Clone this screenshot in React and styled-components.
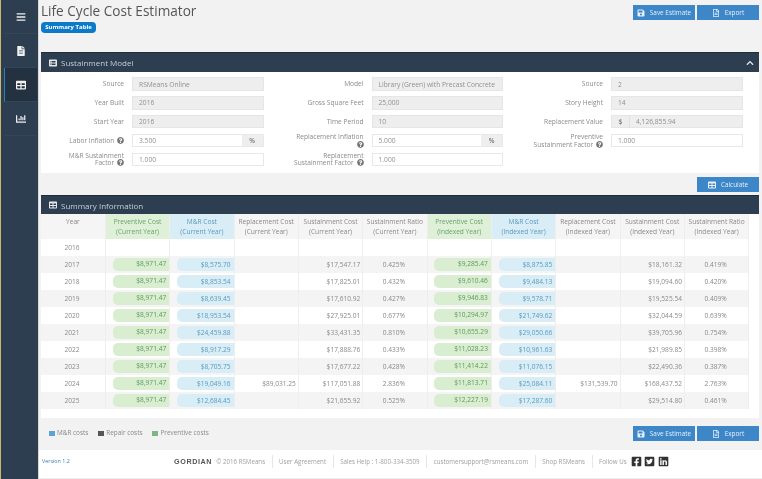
import React from "react";
import styled, { createGlobalStyle } from "styled-components";
import {
  FaBars,
  FaFileAlt,
  FaTable,
  FaChartBar,
  FaChevronUp,
  FaQuestionCircle,
  FaSave,
  FaRegFileAlt,
  FaListAlt,
  FaFacebookSquare,
  FaTwitterSquare,
  FaLinkedin,
} from "react-icons/fa";

///style///

const GlobalStyle = createGlobalStyle`
  html, body {
    margin: 0;
    padding: 0;
    background: #fff;
    overflow: hidden;
  }
  * { box-sizing: border-box; }
`;

const AppWrapper = styled.div`
  width: 762px;
  height: 479px;
  display: flex;
  font-family: "Open Sans", sans-serif;
  color: #777;
  filter: blur(0.45px);
`;

const Sidebar = styled.nav`
  width: 39px;
  flex: none;
  background: #2c3e50;
  border-left: 1px solid #c9b873;
  padding: 0 1px 0 3px;
  border-right: 1px solid #d8d8d8;
`;

const NavItem = styled.div`
  height: 34px;
  display: flex;
  align-items: center;
  justify-content: center;
  color: #f0f0f0;
  font-size: 10px;
  border-bottom: 1px solid #33475a;
  background: ${(p) => (p.$active ? "#233140" : "transparent")};
  border-left: 1px solid ${(p) => (p.$active ? "#2a7fc4" : "transparent")};
`;

const Main = styled.main`
  flex: 1;
  min-width: 0;
  display: flex;
  flex-direction: column;
  background: #f2f2f2;
`;

const Content = styled.div`
  flex: 1;
  padding: 0 3px 0 2px;
`;

const TopBar = styled.header`
  height: 52px;
  display: flex;
  justify-content: space-between;
  align-items: flex-start;
`;

const Title = styled.h1`
  margin: 0;
  font-size: 13.6px;
  line-height: 21px;
  font-weight: 400;
  color: #555;
`;

const Badge = styled.span`
  display: block;
  width: 55px;
  height: 11px;
  margin-top: 1px;
  border-radius: 4px;
  background: #0d7ac9;
  color: #fff;
  font-size: 6px;
  font-weight: 700;
  line-height: 11px;
  text-align: center;
`;

const ButtonRow = styled.div`
  display: flex;
  justify-content: flex-end;
  gap: 2px;
  padding-top: ${(p) => p.$top}px;
  padding-bottom: ${(p) => p.$bottom || 0}px;
`;

const ActionButton = styled.button`
  width: 62px;
  height: 15px;
  padding: 0;
  border: none;
  background: #3d87c8;
  color: #e6f0f8;
  font-family: inherit;
  font-size: 6.4px;
  display: flex;
  align-items: center;
  justify-content: center;
  gap: 5px;
  svg { font-size: 8px; flex: none; }
`;

const PanelHeader = styled.div`
  height: ${(p) => p.$height}px;
  background: #2c3e50;
  border-top: 1px solid #1f2d3a;
  color: #c4ced7;
  font-size: 8px;
  display: flex;
  align-items: center;
  gap: 4px;
  padding: 0 5px 0 8px;
  svg { font-size: 8px; color: #e4e8ec; }
`;

const HeaderTitle = styled.span`
  flex: 1;
`;

const FormBody = styled.div`
  height: 101px;
  background: #fff;
  padding: 5.4px 0 0;
  display: grid;
  grid-template-columns: repeat(3, 239.5px);
  grid-auto-rows: 13.5px;
  row-gap: 5.3px;
`;

const Field = styled.div`
  display: flex;
  align-items: center;
  padding-right: 17px;
`;

const Label = styled.div`
  width: 83px;
  margin-right: 8px;
  flex: none;
  text-align: right;
  font-size: 6.6px;
  line-height: 7.5px;
  color: #8a8a8a;
  svg { font-size: 7px; color: #777; vertical-align: -1px; margin-left: 1px; }
`;

const Input = styled.div`
  flex: 1;
  height: 13.5px;
  display: flex;
  align-items: center;
  background: ${(p) => (p.$readOnly ? "#eee" : "#fff")};
  border: 1px solid ${(p) => (p.$readOnly ? "#e6e6e6" : "#e8e8e8")};
  font-size: 6.7px;
  color: #909090;
  padding-left: 6px;
`;

const InputText = styled.span`
  flex: 1;
  white-space: nowrap;
`;

const Addon = styled.span`
  width: 21px;
  height: 100%;
  flex: none;
  display: flex;
  align-items: center;
  justify-content: center;
  background: #eee;
  font-weight: 600;
  font-size: 6.6px;
  color: #777;
`;

const PrefixAddon = styled(Addon)`
  width: 18px;
  margin: 0 6px 0 -6px;
  border-right: 1px solid #e0e0e0;
`;

const TablePanel = styled.div`
  background: #fff;
  padding-bottom: 9px;
`;

const Table = styled.table`
  width: 708px;
  table-layout: fixed;
  border-collapse: collapse;
  font-size: 6.6px;
`;

const HeadCell = styled.th`
  width: 64.35px;
  height: 25px;
  padding: 0;
  font-weight: 400;
  line-height: 9.5px;
  text-align: center;
  white-space: nowrap;
  border-right: 1px solid #eee;
  background: ${(p) =>
    p.$tone === "green" ? "#dff0d8" : p.$tone === "blue" ? "#d9edf7" : "#f5f5f5"};
  color: ${(p) =>
    p.$tone === "green" ? "#6ba36b" : p.$tone === "blue" ? "#5b9abd" : "#8a8a8a"};
`;

const Row = styled.tr`
  height: 17px;
  background: ${(p) => (p.$striped ? "#f4f4f4" : "#fff")};
`;

const Cell = styled.td`
  padding: 0 2px 0 0;
  text-align: ${(p) => p.$align || "right"};
  border-right: 1px solid #eee;
  color: #8a8a8a;
  white-space: nowrap;
`;

const PillCell = styled.td`
  padding: 0;
  border-right: 1px solid #eee;
`;

const Pill = styled.div`
  height: 13px;
  margin-left: 6.7px;
  border-radius: 5px 0 0 5px;
  background: ${(p) => (p.$tone === "green" ? "#d9eed0" : "#d9edf7")};
  color: ${(p) => (p.$tone === "green" ? "#5f975f" : "#5b9abd")};
  line-height: ${(p) => (p.$tone === "green" ? 11 : 14)}px;
  text-align: right;
  padding-right: 3px;
`;

const BottomBar = styled.div`
  height: 32px;
  display: flex;
  justify-content: space-between;
  align-items: flex-start;
`;

const Legend = styled.div`
  display: flex;
  gap: 10px;
  padding: 11px 0 0 8px;
  font-size: 6.4px;
  color: #8a8a8a;
`;

const LegendItem = styled.span`
  display: flex;
  align-items: center;
  gap: 2px;
  line-height: 8px;
  &::before {
    content: "";
    width: 6px;
    height: 5px;
    background: ${(p) => p.$color};
  }
`;

const Footer = styled.footer`
  height: 29px;
  flex: none;
  background: #fff;
  display: flex;
  align-items: flex-start;
  padding: 5px 0 0 3px;
  font-size: 6.2px;
  color: #a0a0a0;
  border-bottom: 1px solid #eee;
`;

const Version = styled.span`
  width: 125.5px;
  margin-top: 2px;
  font-size: 5.4px;
  color: #3c7fb5;
`;

const FooterLink = styled.span`
  display: flex;
  align-items: center;
  height: 13px;
  padding: 0 6.5px;
  border-right: ${(p) => (p.$last ? "none" : "1px solid #e6e6e6")};
  white-space: nowrap;
  gap: 1px;
`;

const Logo = styled.span`
  font-family: "Liberation Sans", sans-serif;
  font-weight: 700;
  font-size: 7.2px;
  letter-spacing: 0.6px;
  color: #555;
  margin-right: 3px;
`;

const Social = styled.span`
  display: flex;
  gap: 2.5px;
  margin-left: 3px;
  font-size: 11px;
  color: #333;
`;

//style end//

const rows = [
  ["2016"],
  ["2017", "$8,575.70", "", "$17,547.17", "0.425%", "$9,285.47", "$8,875.85", "", "$18,161.32", "0.419%"],
  ["2018", "$8,853.54", "", "$17,825.01", "0.432%", "$9,610.46", "$9,484.13", "", "$19,094.60", "0.420%"],
  ["2019", "$8,639.45", "", "$17,610.92", "0.427%", "$9,946.83", "$9,578.71", "", "$19,525.54", "0.409%"],
  ["2020", "$18,953.54", "", "$27,925.01", "0.677%", "$10,294.97", "$21,749.62", "", "$32,044.59", "0.639%"],
  ["2021", "$24,459.88", "", "$33,431.35", "0.810%", "$10,655.29", "$29,050.66", "", "$39,705.96", "0.754%"],
  ["2022", "$8,917.29", "", "$17,888.76", "0.433%", "$11,028.23", "$10,961.63", "", "$21,989.85", "0.398%"],
  ["2023", "$8,705.75", "", "$17,677.22", "0.428%", "$11,414.22", "$11,076.15", "", "$22,490.36", "0.387%"],
  ["2024", "$19,049.16", "$89,031.25", "$117,051.88", "2.836%", "$11,813.71", "$25,084.11", "$131,539.70", "$168,437.52", "2.763%"],
  ["2025", "$12,684.45", "", "$21,655.92", "0.525%", "$12,227.19", "$17,287.60", "", "$29,514.80", "0.461%"],
];

const heads = [
  ["Preventive Cost", "green"],
  ["M&R Cost", "blue"],
  ["Replacement Cost"],
  ["Sustainment Cost"],
  ["Sustainment Ratio"],
];

const Help = () => <FaQuestionCircle />;

const Buttons = ({ top }) => (
  <ButtonRow $top={top}>
    <ActionButton><FaSave />Save Estimate</ActionButton>
    <ActionButton><FaRegFileAlt />Export</ActionButton>
  </ButtonRow>
);

const FormField = ({ label, value, readOnly, suffix, prefix }) => (
  <Field>
    <Label>{label}</Label>
    <Input $readOnly={readOnly}>
      {prefix && <PrefixAddon>{prefix}</PrefixAddon>}
      <InputText>{value}</InputText>
      {suffix && <Addon>{suffix}</Addon>}
    </Input>
  </Field>
);

const App = () => (
  <AppWrapper>
    <GlobalStyle />
    <Sidebar>
      <NavItem><FaBars /></NavItem>
      <NavItem><FaFileAlt /></NavItem>
      <NavItem $active><FaTable /></NavItem>
      <NavItem><FaChartBar /></NavItem>
    </Sidebar>
    <Main>
      <Content>
        <TopBar>
          <div>
            <Title>Life Cycle Cost Estimator</Title>
            <Badge>Summary Table</Badge>
          </div>
          <Buttons top={5} />
        </TopBar>

        <PanelHeader $height={20}>
          <FaListAlt />
          <HeaderTitle>Sustainment Model</HeaderTitle>
          <FaChevronUp />
        </PanelHeader>
        <FormBody>
          <FormField label="Source" value="RSMeans Online" readOnly />
          <FormField label="Model" value="Library (Green) with Precast Concrete" readOnly />
          <FormField label="Source" value="2" readOnly />
          <FormField label="Year Built" value="2016" readOnly />
          <FormField label="Gross Square Feet" value="25,000" readOnly />
          <FormField label="Story Height" value="14" readOnly />
          <FormField label="Start Year" value="2016" readOnly />
          <FormField label="Time Period" value="10" readOnly />
          <FormField label="Replacement Value" value="4,126,855.94" prefix="$" readOnly />
          <FormField label={<>Labor Inflation <Help /></>} value="3.500" suffix="%" />
          <FormField label={<>Replacement Inflation<br /><Help /></>} value="5.000" suffix="%" />
          <FormField label={<>Preventive<br />Sustainment Factor <Help /></>} value="1.000" />
          <FormField label={<>M&amp;R Sustainment<br />Factor <Help /></>} value="1.000" />
          <FormField label={<>Replacement<br />Sustainment Factor <Help /></>} value="1.000" />
        </FormBody>

        <ButtonRow $top={4} $bottom={3}>
          <ActionButton><FaTable />Calculate</ActionButton>
        </ButtonRow>

        <TablePanel>
          <PanelHeader $height={19}>
            <FaTable />
            <HeaderTitle>Summary Information</HeaderTitle>
          </PanelHeader>
          <Table>
            <thead>
              <tr>
                <HeadCell>Year<br />&nbsp;</HeadCell>
                {["Current", "Indexed"].flatMap((period) =>
                  heads.map(([name, tone]) => (
                    <HeadCell key={period + name} $tone={tone}>
                      {name}<br />({period} Year)
                    </HeadCell>
                  ))
                )}
              </tr>
            </thead>
            <tbody>
              {rows.map(([year, ...v], idx) => (
                <Row key={year} $striped={idx % 2 === 1}>
                  <Cell $align="center">{year}</Cell>
                  {v.length === 0
                    ? Array.from({ length: 10 }, (_, i) => <Cell key={i} />)
                    : [0, 5].flatMap((o) => [
                        <PillCell key={o}><Pill $tone="green">{o === 0 ? "$8,971.47" : v[4]}</Pill></PillCell>,
                        <PillCell key={o + 1}><Pill $tone="blue">{v[o === 0 ? 0 : 5]}</Pill></PillCell>,
                        <Cell key={o + 2}>{v[o === 0 ? 1 : 6]}</Cell>,
                        <Cell key={o + 3}>{v[o === 0 ? 2 : 7]}</Cell>,
                        <Cell key={o + 4} $align="center">{v[o === 0 ? 3 : 8]}</Cell>,
                      ])}
                </Row>
              ))}
            </tbody>
          </Table>
        </TablePanel>

        <BottomBar>
          <Legend>
            <LegendItem $color="#5ba4d4">M&amp;R costs</LegendItem>
            <LegendItem $color="#555">Repair costs</LegendItem>
            <LegendItem $color="#7fb584">Preventive costs</LegendItem>
          </Legend>
          <Buttons top={8} />
        </BottomBar>
      </Content>

      <Footer>
        <Version>Version 1.2</Version>
        <FooterLink><Logo>GORDIAN</Logo> © 2016 RSMeans</FooterLink>
        <FooterLink>User Agreement</FooterLink>
        <FooterLink>Sales Help : 1-800-334-3509</FooterLink>
        <FooterLink>customersupport@rsmeans.com</FooterLink>
        <FooterLink>Shop RSMeans</FooterLink>
        <FooterLink $last>
          Follow Us
          <Social><FaFacebookSquare /><FaTwitterSquare /><FaLinkedin /></Social>
        </FooterLink>
      </Footer>
    </Main>
  </AppWrapper>
);

export default App;
